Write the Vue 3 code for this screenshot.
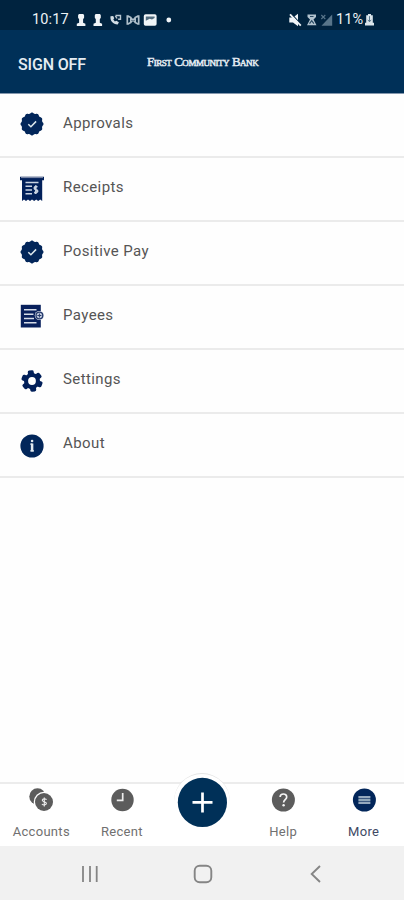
<script setup>
const menu = [
  { icon: 'badge', label: 'Approvals' },
  { icon: 'receipt', label: 'Receipts' },
  { icon: 'badge', label: 'Positive Pay' },
  { icon: 'payee', label: 'Payees' },
  { icon: 'gear', label: 'Settings' },
  { icon: 'info', label: 'About' },
]

// Closed outline whose radius ripples around the centre of a 24x24 box.
function ripple(count, base, amplitude) {
  const points = []
  for (let i = 0; i < 180; i++) {
    const a = (i / 180) * Math.PI * 2
    const r = base + amplitude * Math.cos(a * count)
    points.push(`${(12 + r * Math.sin(a)).toFixed(2)},${(12 - r * Math.cos(a)).toFixed(2)}`)
  }
  return points.join(' ')
}
const badgeShape = ripple(12, 11, 0.5)
</script>

<template>
  <div class="screen">
    <div class="status">
      <span class="clock">10:17</span>
      <svg class="notices" width="98" height="16" viewBox="0 0 98 16">
        <g v-for="x in [6.1, 22.8]" :key="x" :transform="`translate(${x} 0)`" fill="#f1f5f8">
          <path d="M-2.200 2h4.400L3 3.300v2.400L2 7.200v3.600l2.300 1v2.200h-8.600v-2.200l2.300-1V7.200l-1-1.500V3.300z" />
        </g>
        <path d="M35.500 4.200c-.6 4.800 2.700 8.300 7.200 8.200l1.200-2.200-2.600-1.400-1.400.8-1.600-2 .9-1.400-1-2.200z" fill="#d3dde4" />
        <path d="M40.500 3.500h5v3.800h-2.400M42 6.500l-1.600-2.600" fill="none" stroke="#b9c7d1" stroke-width="1.400" />
        <path d="M52.300 3.200v9.600M63.700 3.200v9.600M52.500 3.700l3.300 1.700v5.200l-3.300 1.700M63.500 3.700l-3.300 1.700v5.200l3.300 1.700M56 6l4 4M60 6l-4 4" fill="none" stroke="#afbfca" stroke-width="1.700" />
        <rect x="68.800" y="2.300" width="12.800" height="11.400" rx="1.800" fill="#f1f5f8" />
        <path d="M70.800 4.500h8.800v1.400l-2.600 1.500-2.300-.6-3.900 2z" fill="#526b7d" />
        <circle cx="93.800" cy="8" r="2.400" fill="#f1f5f8" />
      </svg>
      <svg class="signals" width="46" height="16" viewBox="0 0 46 16">
        <path d="M1.300 5.500H5l5-3.800v12.600l-5-3.800H1.300z" fill="#f1f5f8" />
        <path d="M3.500 2l9.500 10.500" stroke="#00233f" stroke-width="1.200" />
        <path d="M2 2.300l10.800 11.400" stroke="#f1f5f8" stroke-width="1.800" />
        <path d="M19.500 2.600h8.500v2.300l-2.500 2.500 3 5.800h-9.500l3-5.800-2.500-2.500z" fill="#b2c3cf" />
        <path d="M22 4.500h3.500M21.500 11.700l2.200-3 2.200 3" fill="none" stroke="#274963" stroke-width="1.200" />
        <path d="M33.500 13.700L44.200 2.600v11.100z" fill="#58758a" />
        <path d="M33.300 3l4 4M37.300 3l-4 4" stroke="#58758a" stroke-width="1.100" />
      </svg>
      <span class="percent">11%</span>
      <svg class="battery" width="9" height="14" viewBox="0 0 9 14">
        <path d="M3 1h3v1.200h1.800v7.600H9v2.700H0V9.800h1.200V2.200H3z" fill="#dbe5eb" />
        <path d="M4.500 3.200v5.600M2.800 6.800l1.700 2 1.700-2" fill="none" stroke="#5c788c" stroke-width="1" />
      </svg>
    </div>

    <header class="header">
      <span class="signoff">SIGN OFF</span>
      <span class="bank">First Community Bank</span>
    </header>

    <main class="list">
      <div v-for="item in menu" :key="item.label" class="row">
        <svg v-if="item.icon === 'badge'" class="icon raised" viewBox="0 0 24 24">
          <polygon :points="badgeShape" fill="#02265a" />
          <path d="M8.300 12.200l2.600 2.500 5.200-5.300" fill="none" stroke="#dce7ec" stroke-width="1.500" />
        </svg>
        <svg v-else-if="item.icon === 'receipt'" class="icon receipt" viewBox="0 0 24 26">
          <path d="M0 .8h24v3.500h-1.800V25l-2-1.500-2 1.500-2-1.500-2 1.500-2.200-1.500-2 1.500-2-1.500-2 1.500-2-1.500-2 1.500V4.300H0z" fill="#02205a" />
          <path d="M1 1.500h22" stroke="#7986a6" stroke-width="1.200" />
          <path d="M5.500 6.500h13M5.500 10.300h6.500M5.500 14h6.500M5.500 17.700h6.500" stroke="#cad3e2" stroke-width="1.400" />
          <path d="M17.500 10.800c-3.500-.8-4.200 2.100-1.700 2.700 3.200.8 2 3.800-1.700 2.900M15.800 9.300v8.600" fill="none" stroke="#cad3e2" stroke-width="1.600" />
        </svg>
        <svg v-else-if="item.icon === 'payee'" class="icon raised" viewBox="0 0 24 24">
          <path d="M.8.800h20v22.700H.8z" fill="#08205c" />
          <path d="M4 5.800h12.500M4 10.200h9.500M4 14.500h10M4 18.800h12.500" stroke="#d5dce8" stroke-width="1.600" />
          <circle cx="19.400" cy="11.500" r="4.600" fill="#eef1f6" />
          <circle cx="19.400" cy="11.500" r="3.400" fill="#c3cce0" stroke="#263b6d" stroke-width="1.400" />
          <path d="M19.400 9.500v4M17.400 11.500h4" stroke="#263b6d" stroke-width="1" />
        </svg>
        <svg v-else-if="item.icon === 'gear'" class="icon" viewBox="0 0 24 24">
          <g fill="#02205a" transform="rotate(-8 12 12)">
            <rect v-for="n in 6" :key="n" x="9" y="1.300" width="6" height="6.500" rx="1.700" :transform="`rotate(${n * 60} 12 12)`" />
            <circle cx="12" cy="12" r="8" />
          </g>
          <circle cx="12" cy="12" r="3.900" fill="#fff" />
        </svg>
        <svg v-else class="icon info" viewBox="0 0 24 24">
          <circle cx="12" cy="12" r="11.600" fill="#02265a" />
          <path d="M12.100 9.500v8" fill="none" stroke="#e2eaf0" stroke-width="2.500" />
          <path d="M10.300 10.100h2M10.300 16.900h3.700" stroke="#e2eaf0" stroke-width="1.100" />
          <circle cx="12.100" cy="7" r="1.300" fill="#e2eaf0" />
        </svg>
        <span class="label">{{ item.label }}</span>
      </div>
    </main>

    <nav class="tabs">
      <div class="tab">
        <svg width="26" height="24" viewBox="0 0 26 24">
          <circle cx="9.500" cy="8.500" r="8.200" fill="#5c5c5c" />
          <circle cx="16" cy="14" r="10.300" fill="#fff" />
          <circle cx="16" cy="14" r="9" fill="#5c5c5c" />
          <path d="M18.600 11.700c-1.300-1.300-4.500-1-4.200.8.300 1.500 4.200 1.200 4 3-.2 1.600-3.100 1.800-4.500.6M16.300 9.500v9" fill="none" stroke="#e8e8e8" stroke-width="1.200" />
        </svg>
        <span>Accounts</span>
      </div>
      <div class="tab">
        <svg width="24" height="24" viewBox="0 0 24 24">
          <circle cx="12.500" cy="12" r="11.200" fill="#5c5c5c" />
          <path d="M12.700 5v7.300H6.800" fill="none" stroke="#ededed" stroke-width="1.700" />
        </svg>
        <span>Recent</span>
      </div>
      <div class="tab center">
        <div class="halo">
          <svg width="50" height="50" viewBox="0 0 50 50">
            <circle cx="25.400" cy="25.400" r="24.600" fill="#003058" />
            <path d="M25.500 15.400v20M15.500 25.400h20" stroke="#fff" stroke-width="2.700" />
          </svg>
        </div>
      </div>
      <div class="tab">
        <svg width="24" height="24" viewBox="0 0 24 24">
          <circle cx="12.400" cy="12" r="11.500" fill="#5c5c5c" />
          <path d="M9.100 9.100c.1-4.200 6.700-4 6.600-.2 0 2.600-3.100 2.700-3.100 5.500" fill="none" stroke="#f5f5f5" stroke-width="1.700" />
          <circle cx="12.600" cy="17.200" r="1.200" fill="#f5f5f5" />
        </svg>
        <span>Help</span>
      </div>
      <div class="tab active">
        <svg width="24" height="24" viewBox="0 0 24 24">
          <circle cx="12.400" cy="12" r="11.500" fill="#02265a" />
          <path d="M6.400 9h12M6.400 15h12" stroke="#c5d4de" stroke-width="1.600" />
          <path d="M6.400 12h12" stroke="#8fa6b9" stroke-width="2.800" />
        </svg>
        <span>More</span>
      </div>
    </nav>

    <footer class="system">
      <svg width="20" height="20" viewBox="0 0 20 20">
        <path d="M3 2v16M10 2v16M16.700 2v16" stroke="#858585" stroke-width="1.800" />
      </svg>
      <svg width="20" height="20" viewBox="0 0 20 20">
        <rect x="1.700" y="1.700" width="16.600" height="16.600" rx="5" fill="none" stroke="#858585" stroke-width="1.900" />
      </svg>
      <svg width="20" height="20" viewBox="0 0 20 20">
        <path d="M14 2l-8.300 8 8.300 8" fill="none" stroke="#858585" stroke-width="1.900" />
      </svg>
    </footer>
  </div>
</template>

<style>
body {
  margin: 0;
  background: #fff;
}
</style>

<style scoped>
.screen {
  width: 404px;
  height: 900px;
  display: flex;
  flex-direction: column;
  overflow: hidden;
  background: #fefefe;
  font-family: Roboto, "Liberation Sans", sans-serif;
}
svg {
  display: block;
  flex: none;
}
.status {
  height: 30px;
  flex: none;
  box-sizing: border-box;
  padding: 9px 30px 0 32px;
  display: flex;
  align-items: center;
  background: #00233f;
  color: #edf2f5;
  font-size: 14.5px;
  line-height: 20px;
}
.clock {
  width: 43px;
  letter-spacing: 0.15px;
}
.signals {
  margin-left: 115px;
}
.percent {
  margin-left: 2px;
  width: 28px;
  letter-spacing: 0.1px;
}
.battery {
  margin-left: 1px;
}
.header {
  height: 64px;
  flex: none;
  box-sizing: border-box;
  padding: 6px 18px 0;
  display: flex;
  align-items: center;
  background: #003058;
  border-bottom: 1px solid #8497ad;
  color: #e5ecf2;
}
.signoff {
  width: 129px;
  font-size: 16px;
  font-weight: 500;
  letter-spacing: -0.15px;
  white-space: nowrap;
}
.bank {
  margin-top: -5px;
  font-family: "Liberation Serif", serif;
  font-size: 13px;
  -webkit-text-stroke: 0.5px #e5ecf2;
  font-variant-caps: small-caps;
  letter-spacing: -0.47px;
  white-space: nowrap;
}
.list {
  flex: 1;
}
.row {
  height: 64px;
  box-sizing: border-box;
  border-bottom: 2px solid #ebebeb;
  padding: 0 0 1px 20px;
  display: flex;
  align-items: center;
}
.icon {
  width: 24px;
  height: 24px;
}
.raised {
  margin-bottom: 2px;
}
.receipt {
  height: 26px;
}
.info {
  margin-top: 2px;
}
.label {
  margin-left: 19px;
  padding-bottom: 3px;
  font-size: 15px;
  letter-spacing: 0.4px;
  color: #555;
}
.tabs {
  height: 64px;
  flex: none;
  box-sizing: border-box;
  border-top: 2px solid #ececec;
  padding: 0 0 0 1px;
  display: grid;
  grid-template-columns: repeat(5, 1fr);
  background: #fff;
}
.tab {
  display: flex;
  flex-direction: column;
  align-items: center;
  padding-top: 4px;
  font-size: 13px;
  line-height: 16px;
  letter-spacing: 0.3px;
  color: #707070;
}
.tab span {
  margin-top: 12px;
}
.active {
  color: #3e4964;
}
.center {
  padding-top: 0;
}
.halo {
  margin-top: -11px;
  padding: 3px;
  border-radius: 50%;
  border-top: 1px solid #e4e4e4;
  background: #fff;
}
.system {
  height: 54px;
  flex: none;
  box-sizing: border-box;
  padding: 2px 78px 0 80px;
  display: flex;
  justify-content: space-between;
  align-items: center;
  background: #f1f1f1;
}
</style>
